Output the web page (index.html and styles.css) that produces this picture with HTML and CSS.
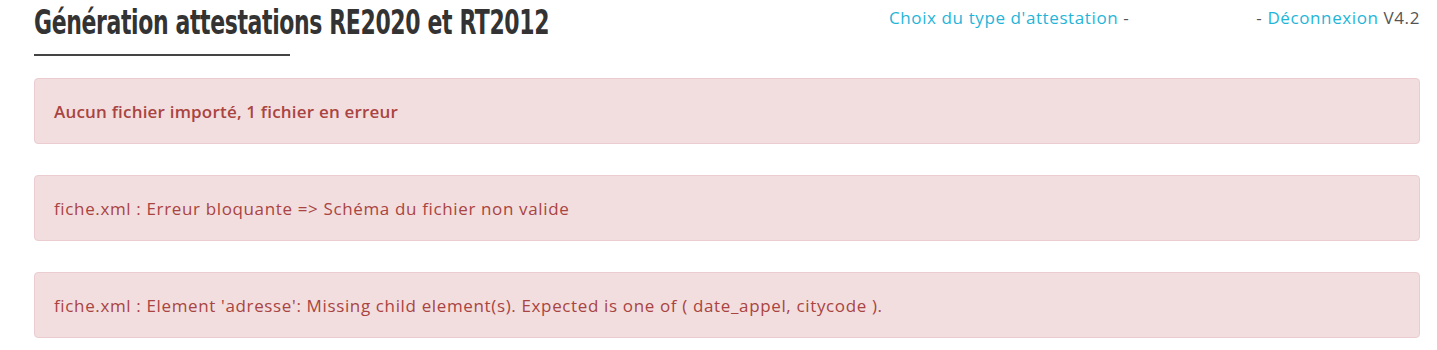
FILE: index.html
```html
<!DOCTYPE html>
<html lang="fr">
<head>
<meta charset="utf-8">
<title>Génération attestations</title>
<link rel="stylesheet" href="styles.css">
</head>
<body>
<div class="page">
  <header class="header">
    <div class="title-block">
      <h1 class="title">Génération attestations RE2020 et RT2012</h1>
      <div class="title-rule"></div>
    </div>
    <nav class="nav">
      <a class="nav-link" href="#">Choix du type d'attestation</a><span class="sep"> - </span><span class="nav-gap"></span><span class="sep">- </span><a class="nav-link" href="#">Déconnexion</a><span class="version"> V4.2</span>
    </nav>
  </header>
  <main class="alerts">
    <div class="alert alert-strong">Aucun fichier importé, 1 fichier en erreur</div>
    <div class="alert">fiche.xml : Erreur bloquante =&gt; Schéma du fichier non valide</div>
    <div class="alert">fiche.xml : Element 'adresse': Missing child element(s). Expected is one of ( date_appel, citycode ).</div>
  </main>
</div>
</body>
</html>
```
FILE: styles.css
```css
* { box-sizing: border-box; }
body {
  margin: 0;
  background: #fff;
  font-family: "Open Sans", "Noto Sans", sans-serif;
  color: #444;
}
.page {
  padding: 0 17px 0 34px;
}
.header {
  display: flex;
  justify-content: space-between;
  align-items: flex-start;
  height: 78px;
}
.title-block {
  padding-top: 2px;
}
.title {
  margin: 0;
  font-family: "DejaVu Sans Condensed", "DejaVu Sans", sans-serif;
  font-weight: bold;
  font-size: 33px;
  line-height: 42px;
  color: #333;
  letter-spacing: -0.5px;
  white-space: nowrap;
  transform: scaleX(0.74);
  transform-origin: left center;
}
.title-rule {
  width: 256px;
  height: 2px;
  background: #444;
  margin-top: 10px;
}
.nav {
  padding-top: 6px;
  font-size: 17px;
  letter-spacing: 0.6px;
  line-height: 24px;
  color: #555;
  display: flex;
  white-space: pre;
}
.nav-link {
  color: #1fb5d9;
  text-decoration: none;
}
.nav-gap {
  width: 122px;
}
.alerts {
  display: flex;
  flex-direction: column;
  gap: 31px;
}
.alert {
  height: 66px;
  display: flex;
  align-items: center;
  padding: 0 19px;
  background: #f2dede;
  border: 1px solid #ebccd1;
  border-radius: 4px;
  color: #a94442;
  font-size: 17px;
  letter-spacing: 0.64px;
}
.alert-strong {
  font-weight: 600;
  letter-spacing: 0.2px;
}
```
